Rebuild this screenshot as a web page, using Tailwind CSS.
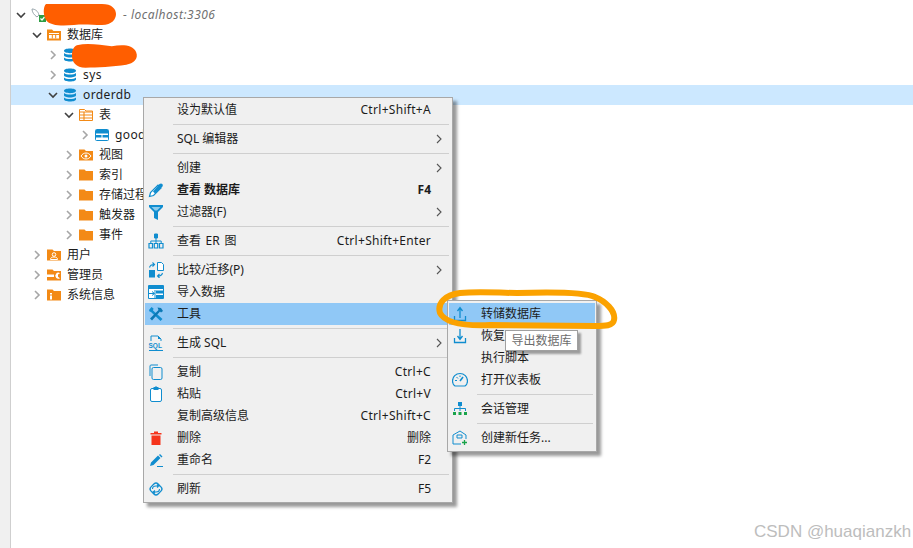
<!DOCTYPE html>
<html lang="en">
<head>
<meta charset="UTF-8" />
<title>DBeaver context menu</title>
<script src="https://cdn.jsdelivr.net/npm/@tailwindcss/browser@4"></script>
</head>
<body class="bg-white">
<div class="relative w-[913px] h-[548px] overflow-hidden bg-white text-[12px] leading-none text-[#1c1c1c] font-['Noto_Sans','Noto_Sans_CJK_SC',sans-serif]">

  <!-- icon defs -->
  <svg class="hidden">
    <symbol id="chev-d" viewBox="0 0 10 10"><path d="M1 3l4 4 4-4" fill="none" stroke="#404040" stroke-width="1.6"/></symbol>
    <symbol id="chev-r" viewBox="0 0 10 10"><path d="M3 1l4 4-4 4" fill="none" stroke="#a6a6a6" stroke-width="1.6"/></symbol>
    <symbol id="sub" viewBox="0 0 6 10"><path d="M1 1l4 4-4 4" fill="none" stroke="#555" stroke-width="1.1"/></symbol>
    <symbol id="db" viewBox="0 0 14 14"><path d="M1 2.8C1 1.3 3.7.5 7 .5s6 .8 6 2.3S10.3 5.2 7 5.2 1 4.300 1 2.800zM1 5c1.200 1.100 3.400 1.600 6 1.600S11.800 6.100 13 5v2.300c0 1.300-2.700 2.200-6 2.200s-6-.9-6-2.200zM1 9.400c1.200 1.100 3.400 1.500 6 1.500s4.800-.4 6-1.500v1.900c0 1.400-2.700 2.200-6 2.200s-6-.8-6-2.200z" fill="#108dcf"/></symbol>
    <symbol id="folder" viewBox="0 0 14 14"><path d="M0 1.500h5.500l1.500 1.500h7v9.500H0z" fill="#f38a16"/></symbol>
  </svg>

  <!-- left gutter + tree -->
  <div class="flex h-full">
    <div class="w-[11px] h-full bg-[#f0f0f0] border-r border-[#cfcfcf]"></div>
    <div class="flex-1 pt-[5px]">
      <div class="h-5 flex items-center pl-[5px]">
        <svg class="w-[10px] h-[10px] mr-[5px]"><use href="#chev-d"/></svg>
        <svg class="w-[17px] h-[17px] mr-[75px]" viewBox="0 0 17 17"><path d="M1 2c3 0 6 2 7 6l-2 2C3 8 1 5 1 2z" fill="none" stroke="#9aa7ad" stroke-width="1"/><rect x="8" y="8" width="7" height="7" fill="#2e9e44"/><path d="M9.500 11.500l1.500 1.500 2.500-3" stroke="#fff" stroke-width="1.200" fill="none"/></svg>
        <span class="italic text-[#707070] tracking-[0.5px] font-['Noto_Sans',sans-serif]">- localhost:3306</span>
      </div>
      <div class="h-5 flex items-center pl-[21px]">
        <svg class="w-[10px] h-[10px] mr-[5px]"><use href="#chev-d"/></svg>
        <svg class="w-[14px] h-[14px] mr-[6px]" viewBox="0 0 14 14"><path d="M0 1.500h5l1.500 1.500H14v9.500H0z" fill="#f38a16"/><path d="M2 5h10v5.500H2z" fill="#fff"/><path d="M2 6.500h10M5.300 6.500v4M8.700 6.500v4" stroke="#f38a16" stroke-width="1"/></svg>
        <span>数据库</span>
      </div>
      <div class="h-5 flex items-center pl-[37px]">
        <svg class="w-[10px] h-[10px] mr-[5px]"><use href="#chev-r"/></svg>
        <svg class="w-[14px] h-[14px]"><use href="#db"/></svg>
      </div>
      <div class="h-5 flex items-center pl-[37px]">
        <svg class="w-[10px] h-[10px] mr-[5px]"><use href="#chev-r"/></svg>
        <svg class="w-[14px] h-[14px] mr-[6px]"><use href="#db"/></svg>
        <span class="tracking-[0.4px]">sys</span>
      </div>
      <div class="h-5 flex items-center pl-[37px] bg-[#cce8ff]">
        <svg class="w-[10px] h-[10px] mr-[5px]"><use href="#chev-d"/></svg>
        <svg class="w-[14px] h-[14px] mr-[6px]"><use href="#db"/></svg>
        <span class="tracking-[0.4px]">orderdb</span>
      </div>
      <div class="h-5 flex items-center pl-[53px]">
        <svg class="w-[10px] h-[10px] mr-[5px]"><use href="#chev-d"/></svg>
        <svg class="w-[14px] h-[14px] mr-[6px]" viewBox="0 0 14 14"><path d="M.5 1.500h5l1.500 1.500h6.500v9.500H.5z" fill="#fff" stroke="#f38a16"/><path d="M.5 4h13M.5 7h13M.5 10h13M5 4v8" stroke="#f38a16" stroke-width="1.100"/></svg>
        <span>表</span>
      </div>
      <div class="h-5 flex items-center pl-[69px]">
        <svg class="w-[10px] h-[10px] mr-[5px]"><use href="#chev-r"/></svg>
        <svg class="w-[14px] h-[14px] mr-[6px]" viewBox="0 0 14 14"><rect x=".5" y="1.500" width="13" height="11" rx="1" fill="#fff" stroke="#108dcf"/><path d="M1 2h12v3.500H1zM1 7h5.500v2.500H1zM7.500 7H13v2.500H7.500z" fill="#108dcf"/></svg>
        <span class="tracking-[0.4px]">goods</span>
      </div>
      <div class="h-5 flex items-center pl-[53px]">
        <svg class="w-[10px] h-[10px] mr-[5px]"><use href="#chev-r"/></svg>
        <svg class="w-[14px] h-[14px] mr-[6px]" viewBox="0 0 14 14"><path d="M0 1.500h5.500l1.500 1.500h7v9.500H0z" fill="#f38a16"/><path d="M2 8c1.300-2 3-3 5-3s3.700 1 5 3c-1.300 2-3 3-5 3s-3.700-1-5-3z" fill="none" stroke="#fff" stroke-width="1"/><circle cx="7" cy="8" r="1.500" fill="#fff"/></svg>
        <span>视图</span>
      </div>
      <div class="h-5 flex items-center pl-[53px]">
        <svg class="w-[10px] h-[10px] mr-[5px]"><use href="#chev-r"/></svg>
        <svg class="w-[14px] h-[14px] mr-[6px]"><use href="#folder"/></svg>
        <span>索引</span>
      </div>
      <div class="h-5 flex items-center pl-[53px]">
        <svg class="w-[10px] h-[10px] mr-[5px]"><use href="#chev-r"/></svg>
        <svg class="w-[14px] h-[14px] mr-[6px]"><use href="#folder"/></svg>
        <span>存储过程</span>
      </div>
      <div class="h-5 flex items-center pl-[53px]">
        <svg class="w-[10px] h-[10px] mr-[5px]"><use href="#chev-r"/></svg>
        <svg class="w-[14px] h-[14px] mr-[6px]"><use href="#folder"/></svg>
        <span>触发器</span>
      </div>
      <div class="h-5 flex items-center pl-[53px]">
        <svg class="w-[10px] h-[10px] mr-[5px]"><use href="#chev-r"/></svg>
        <svg class="w-[14px] h-[14px] mr-[6px]"><use href="#folder"/></svg>
        <span>事件</span>
      </div>
      <div class="h-5 flex items-center pl-[21px]">
        <svg class="w-[10px] h-[10px] mr-[5px]"><use href="#chev-r"/></svg>
        <svg class="w-[14px] h-[14px] mr-[6px]" viewBox="0 0 14 14"><path d="M0 1.500h5.500l1.500 1.500h7v9.500H0z" fill="#f38a16"/><circle cx="7" cy="6.500" r="1.800" fill="none" stroke="#fff"/><path d="M3.500 11.500c0-2 1.500-2.500 3.500-2.500s3.500.5 3.500 2.500z" fill="none" stroke="#fff"/></svg>
        <span>用户</span>
      </div>
      <div class="h-5 flex items-center pl-[21px]">
        <svg class="w-[10px] h-[10px] mr-[5px]"><use href="#chev-r"/></svg>
        <svg class="w-[14px] h-[14px] mr-[6px]" viewBox="0 0 14 14"><path d="M0 1.500h5.500l1.500 1.500h7v9.500H0z" fill="#f38a16"/><path d="M0 6.500h7v2.500H0z" fill="#fff"/><path d="M13 5.200a3 3 0 1 0 0 5l-2-1.400V6.600z" fill="#fff"/></svg>
        <span>管理员</span>
      </div>
      <div class="h-5 flex items-center pl-[21px]">
        <svg class="w-[10px] h-[10px] mr-[5px]"><use href="#chev-r"/></svg>
        <svg class="w-[14px] h-[14px] mr-[6px]" viewBox="0 0 14 14"><path d="M0 1.500h5.500l1.500 1.500h7v9.500H0z" fill="#f38a16"/><path d="M3 5h2v1.500H3zM3 7.500h2v4H3z" fill="#fff"/></svg>
        <span>系统信息</span>
      </div>
    </div>
  </div>

  <!-- redaction scribbles -->
  <svg class="absolute left-[43px] top-[2px]" width="75" height="25" viewBox="0 0 75 25"><path d="M3 2h56c10 0 14 5 14 10s-4 11-14 11c-10 0-18-1-28 0-12 1-24 1-28-5C0 13 0 5 3 2z" fill="#ff5e00"/></svg>
  <svg class="absolute left-[71px] top-[42px]" width="68" height="27" viewBox="0 0 70 27"><path d="M6 3c12-3 24 0 36 1 10-2 22-2 25 6 3 7-3 12-10 13-14 2-30 3-42 3C5 26 1 20 1 14 1 9 2 5 6 3z" fill="#ff5e00"/></svg>

  <!-- main context menu -->
  <div class="absolute left-[143px] top-[97px] w-[310px] h-[406px] bg-[#f0f0f0] border border-[#a8a8a8] p-px shadow-[4px_4px_3px_rgba(0,0,0,0.4)]">
    <div class="h-[22px] flex items-center"><div class="w-8"></div><span class="flex-1">设为默认值</span><span class="tracking-[0.3px]">Ctrl+Shift+A</span><div class="w-5"></div></div>
    <div class="h-[7px] ml-[28px] mr-[2px] flex items-center"><div class="w-full h-px bg-[#cfcfcf]"></div></div>
    <div class="h-[22px] flex items-center"><div class="w-8"></div><span class="flex-1">SQL 编辑器</span><div class="w-5 pl-[5px]"><svg class="w-[6px] h-[10px]"><use href="#sub"/></svg></div></div>
    <div class="h-[7px] ml-[28px] mr-[2px] flex items-center"><div class="w-full h-px bg-[#cfcfcf]"></div></div>
    <div class="h-[22px] flex items-center"><div class="w-8"></div><span class="flex-1">创建</span><div class="w-5 pl-[5px]"><svg class="w-[6px] h-[10px]"><use href="#sub"/></svg></div></div>
    <div class="h-[22px] flex items-center font-bold">
      <div class="w-8 pl-[3px]"><svg class="w-4 h-4" viewBox="0 0 16 16"><path d="M1.500 14.500l1-4L10 3l3 3-7.500 7.500z" fill="#fff" stroke="#108dcf" stroke-width="1.200"/><path d="M5 9.500L11.500 2c1-.8 2-.8 2.800 0 .7.800.7 1.800 0 2.700L7 11.500z" fill="#108dcf"/></svg></div>
      <span class="flex-1">查看 数据库</span><span>F4</span><div class="w-5"></div></div>
    <div class="h-[22px] flex items-center">
      <div class="w-8 pl-[3px]"><svg class="w-4 h-4" viewBox="0 0 16 16"><path d="M1 1h14v2l-5 5v8l-4-2V8L1 3z" fill="#108dcf"/><path d="M3.500 3h9L9 6.500H7z" fill="#8ccbec"/></svg></div>
      <span class="flex-1">过滤器(F)</span><div class="w-5 pl-[5px]"><svg class="w-[6px] h-[10px]"><use href="#sub"/></svg></div></div>
    <div class="h-[7px] ml-[28px] mr-[2px] flex items-center"><div class="w-full h-px bg-[#cfcfcf]"></div></div>
    <div class="h-[22px] flex items-center">
      <div class="w-8 pl-[3px]"><svg class="w-4 h-4" viewBox="0 0 16 16"><path d="M6.500 1h3v4h-3z" fill="#108dcf" stroke="#108dcf"/><path d="M1 10.500h3.500v4.500H1zM6.300 10.500h3.400v4.500H6.300zM11.500 10.500H15v4.500h-3.500z" fill="none" stroke="#108dcf" stroke-width="1.200"/><path d="M8 5v5.500M2.800 10.500V8h10.400v2.500" fill="none" stroke="#108dcf"/></svg></div>
      <span class="flex-1 [word-spacing:1.500px]">查看 ER 图</span><span class="tracking-[0.3px]">Ctrl+Shift+Enter</span><div class="w-5"></div></div>
    <div class="h-[7px] ml-[28px] mr-[2px] flex items-center"><div class="w-full h-px bg-[#cfcfcf]"></div></div>
    <div class="h-[22px] flex items-center">
      <div class="w-8 pl-[3px]"><svg class="w-4 h-4" viewBox="0 0 16 16"><path d="M9.500.5h4l2 2v6h-6z" fill="#fff" stroke="#108dcf"/><path d="M1 8h6v7.500H1z" fill="#108dcf"/><path d="M1.500 5.500C2 3.500 3.500 2.500 6 2.500M4.500.5l2 2-2 2M14.500 11c-.5 2-2 3-4.500 3M11.500 12l-2 2 2 2" fill="none" stroke="#108dcf" stroke-width="1.100"/></svg></div>
      <span class="flex-1">比较/迁移(P)</span><div class="w-5 pl-[5px]"><svg class="w-[6px] h-[10px]"><use href="#sub"/></svg></div></div>
    <div class="h-[22px] flex items-center">
      <div class="w-8 pl-[3px]"><svg class="w-4 h-4" viewBox="0 0 16 16"><path d="M.5 1.500h15v13H.5z" fill="#fff" stroke="#108dcf"/><path d="M1 2h14v3H1zM8 6.500h7v3H8zM8 11h7v3H8z" fill="#108dcf"/><path d="M1 9.500h5M4 7.500l2.500 2-2.500 2M7 6v8" fill="none" stroke="#108dcf"/></svg></div>
      <span class="flex-1">导入数据</span><div class="w-5"></div></div>
    <div class="h-[22px] flex items-center bg-[#90c8f6]">
      <div class="w-8 pl-[3px]"><svg class="w-4 h-4" viewBox="0 0 16 16"><path d="M1 4l2.500-3 2 1.500-.5 2 9.500 8.500-2 2L3 6 1.500 5.500z" fill="#108dcf"/><path d="M9.500 1.500L13 2l2 3-2 1.500-1-1L4 14.500l-2-2 8.500-8.500z" fill="#0b78b5"/></svg></div>
      <span class="flex-1">工具</span><div class="w-5"></div></div>
    <div class="h-[7px] ml-[28px] mr-[2px] flex items-center"><div class="w-full h-px bg-[#cfcfcf]"></div></div>
    <div class="h-[22px] flex items-center">
      <div class="w-8 pl-[3px]"><svg class="w-4 h-4" viewBox="0 0 16 16"><path d="M3 6V1h7l3 3v2M1 15.500h14" fill="none" stroke="#108dcf"/><path d="M10 1v3h3z" fill="#108dcf"/><text x="0.500" y="13" font-size="6.500" font-weight="700" fill="#108dcf" font-family="Liberation Sans">SQL</text></svg></div>
      <span class="flex-1">生成 SQL</span><div class="w-5 pl-[5px]"><svg class="w-[6px] h-[10px]"><use href="#sub"/></svg></div></div>
    <div class="h-[7px] ml-[28px] mr-[2px] flex items-center"><div class="w-full h-px bg-[#cfcfcf]"></div></div>
    <div class="h-[22px] flex items-center">
      <div class="w-8 pl-[3px]"><svg class="w-4 h-4" viewBox="0 0 16 16"><path d="M2 12V2c0-.6.400-1 1-1h7" fill="none" stroke="#108dcf"/><rect x="4" y="3.500" width="10" height="12" rx="1.500" fill="none" stroke="#108dcf"/></svg></div>
      <span class="flex-1">复制</span><span class="tracking-[0.3px]">Ctrl+C</span><div class="w-5"></div></div>
    <div class="h-[22px] flex items-center">
      <div class="w-8 pl-[3px]"><svg class="w-4 h-4" viewBox="0 0 16 16"><rect x="2.500" y="2.500" width="11" height="13" rx="1.500" fill="#fff" stroke="#108dcf"/><path d="M5.500 1h1.500l1-1 1 1h1.500v3h-5z" fill="#108dcf"/></svg></div>
      <span class="flex-1">粘贴</span><span class="tracking-[0.3px]">Ctrl+V</span><div class="w-5"></div></div>
    <div class="h-[22px] flex items-center"><div class="w-8"></div><span class="flex-1">复制高级信息</span><span class="tracking-[0.3px]">Ctrl+Shift+C</span><div class="w-5"></div></div>
    <div class="h-[22px] flex items-center">
      <div class="w-8 pl-[3px]"><svg class="w-4 h-4" viewBox="0 0 16 16"><path d="M2.500 3h11v1.500h-11zM6 1.500h4V3H6z" fill="#f5341c"/><path d="M3.500 5.500h9V15h-9z" fill="#f5341c"/></svg></div>
      <span class="flex-1">删除</span><span>删除</span><div class="w-5"></div></div>
    <div class="h-[22px] flex items-center">
      <div class="w-8 pl-[3px]"><svg class="w-4 h-4" viewBox="0 0 16 16"><path d="M2 14l1-3.500L10 3.500l2.500 2.500-7 7zM11 3l1-1 2.500 2.500-1 1z" fill="#108dcf"/><path d="M9 14.500h6" stroke="#108dcf"/></svg></div>
      <span class="flex-1">重命名</span><span>F2</span><div class="w-5"></div></div>
    <div class="h-[7px] ml-[28px] mr-[2px] flex items-center"><div class="w-full h-px bg-[#cfcfcf]"></div></div>
    <div class="h-[22px] flex items-center">
      <div class="w-8 pl-[3px]"><svg class="w-4 h-4" viewBox="0 0 16 16"><rect x="3" y="3" width="10" height="10" rx="3" transform="rotate(45 8 8)" fill="none" stroke="#108dcf" stroke-width="1.300"/><path d="M4.500 8c0-2 1.500-3 3.500-3h2M9 3.500L11 5 9 6.500M11.500 8c0 2-1.500 3-3.500 3H6M7 9.500L5 11l2 1.500" fill="none" stroke="#108dcf" stroke-width="1.100"/></svg></div>
      <span class="flex-1">刷新</span><span>F5</span><div class="w-5"></div></div>
  </div>

  <!-- tools submenu -->
  <div class="absolute left-[447px] top-[300px] w-[150px] h-[152px] bg-[#f0f0f0] border border-[#a8a8a8] p-px shadow-[4px_4px_3px_rgba(0,0,0,0.4)]">
    <div class="h-[22px] mt-px flex items-center bg-[#90c8f6]">
      <div class="w-8 pl-[3px]"><svg class="w-4 h-4" viewBox="0 0 16 16"><path d="M8 12V2M5.500 5L8 1.500 10.500 5M2.500 10v4.500h11V10" fill="none" stroke="#108dcf" stroke-width="1.300"/></svg></div>
      <span>转储数据库</span></div>
    <div class="h-[22px] flex items-center">
      <div class="w-8 pl-[3px]"><svg class="w-4 h-4" viewBox="0 0 16 16"><path d="M8 1v10M5.500 8L8 11.500 10.500 8M2.500 10v4.500h11V10" fill="none" stroke="#108dcf" stroke-width="1.300"/></svg></div>
      <span>恢复</span></div>
    <div class="h-[22px] flex items-center"><div class="w-8"></div><span>执行脚本</span></div>
    <div class="h-[22px] flex items-center">
      <div class="w-8 pl-[3px]"><svg class="w-4 h-4" viewBox="0 0 16 16"><path d="M3 14c-1.500-1-2.500-3-2.500-5a7.500 7.500 0 0 1 15 0c0 2-1 4-2.500 5z" fill="none" stroke="#108dcf" stroke-width="1.200"/><path d="M8 9l3-4" stroke="#108dcf" stroke-width="1.500"/><path d="M3 8.500h2M4.500 5l1.500 1.500M8 3.500V5" stroke="#108dcf"/></svg></div>
      <span>打开仪表板</span></div>
    <div class="h-[7px] ml-[28px] mr-[2px] flex items-center"><div class="w-full h-px bg-[#cfcfcf]"></div></div>
    <div class="h-[22px] flex items-center">
      <div class="w-8 pl-[3px]"><svg class="w-4 h-4" viewBox="0 0 16 16"><path d="M6 1h4v4H6z" fill="#108dcf"/><path d="M8 5v5M2.500 10V7.500h11V10" fill="none" stroke="#108dcf"/><path d="M1 11h3v3H1zM6.500 11h3v3h-3zM12 11h3v3h-3z" fill="#1aa34a"/></svg></div>
      <span>会话管理</span></div>
    <div class="h-[7px] ml-[28px] mr-[2px] flex items-center"><div class="w-full h-px bg-[#cfcfcf]"></div></div>
    <div class="h-[22px] flex items-center">
      <div class="w-8 pl-[3px]"><svg class="w-4 h-4" viewBox="0 0 16 16"><path d="M1 5l7-4 6 4v4M1 5v9h8M5 5h5v3H5z" fill="none" stroke="#108dcf"/><path d="M12.500 10v5M10 12.500h5" stroke="#1aa34a" stroke-width="1.300"/></svg></div>
      <span>创建新任务...</span></div>
  </div>

  <!-- tooltip -->
  <div class="absolute left-[505px] top-[330px] w-[73px] h-[21px] flex items-center justify-center bg-white border border-[#a0a0a0] text-[#6d6d6d] shadow-[3px_3px_2px_rgba(0,0,0,0.35)]">导出数据库</div>

  <!-- hand drawn highlight -->
  <svg class="absolute left-[430px] top-[285px]" width="195" height="50" viewBox="0 0 195 50" fill="none">
    <path d="M87 8C120 7 155 7 165 12 175 16 186 26 184 35 183 41 175 41 165 41L60 40C35 41 15 38 10 28 7 18 15 10 30 8 50 6 70 8 87 8z" stroke="#fba200" stroke-width="6"/>
  </svg>

  <!-- watermark -->
  <div class="absolute left-[754px] top-[524px] text-[17px] leading-4 text-[#bdbdbd] font-['Liberation_Sans',sans-serif]">CSDN @huaqianzkh</div>
</div>
</body>
</html>
